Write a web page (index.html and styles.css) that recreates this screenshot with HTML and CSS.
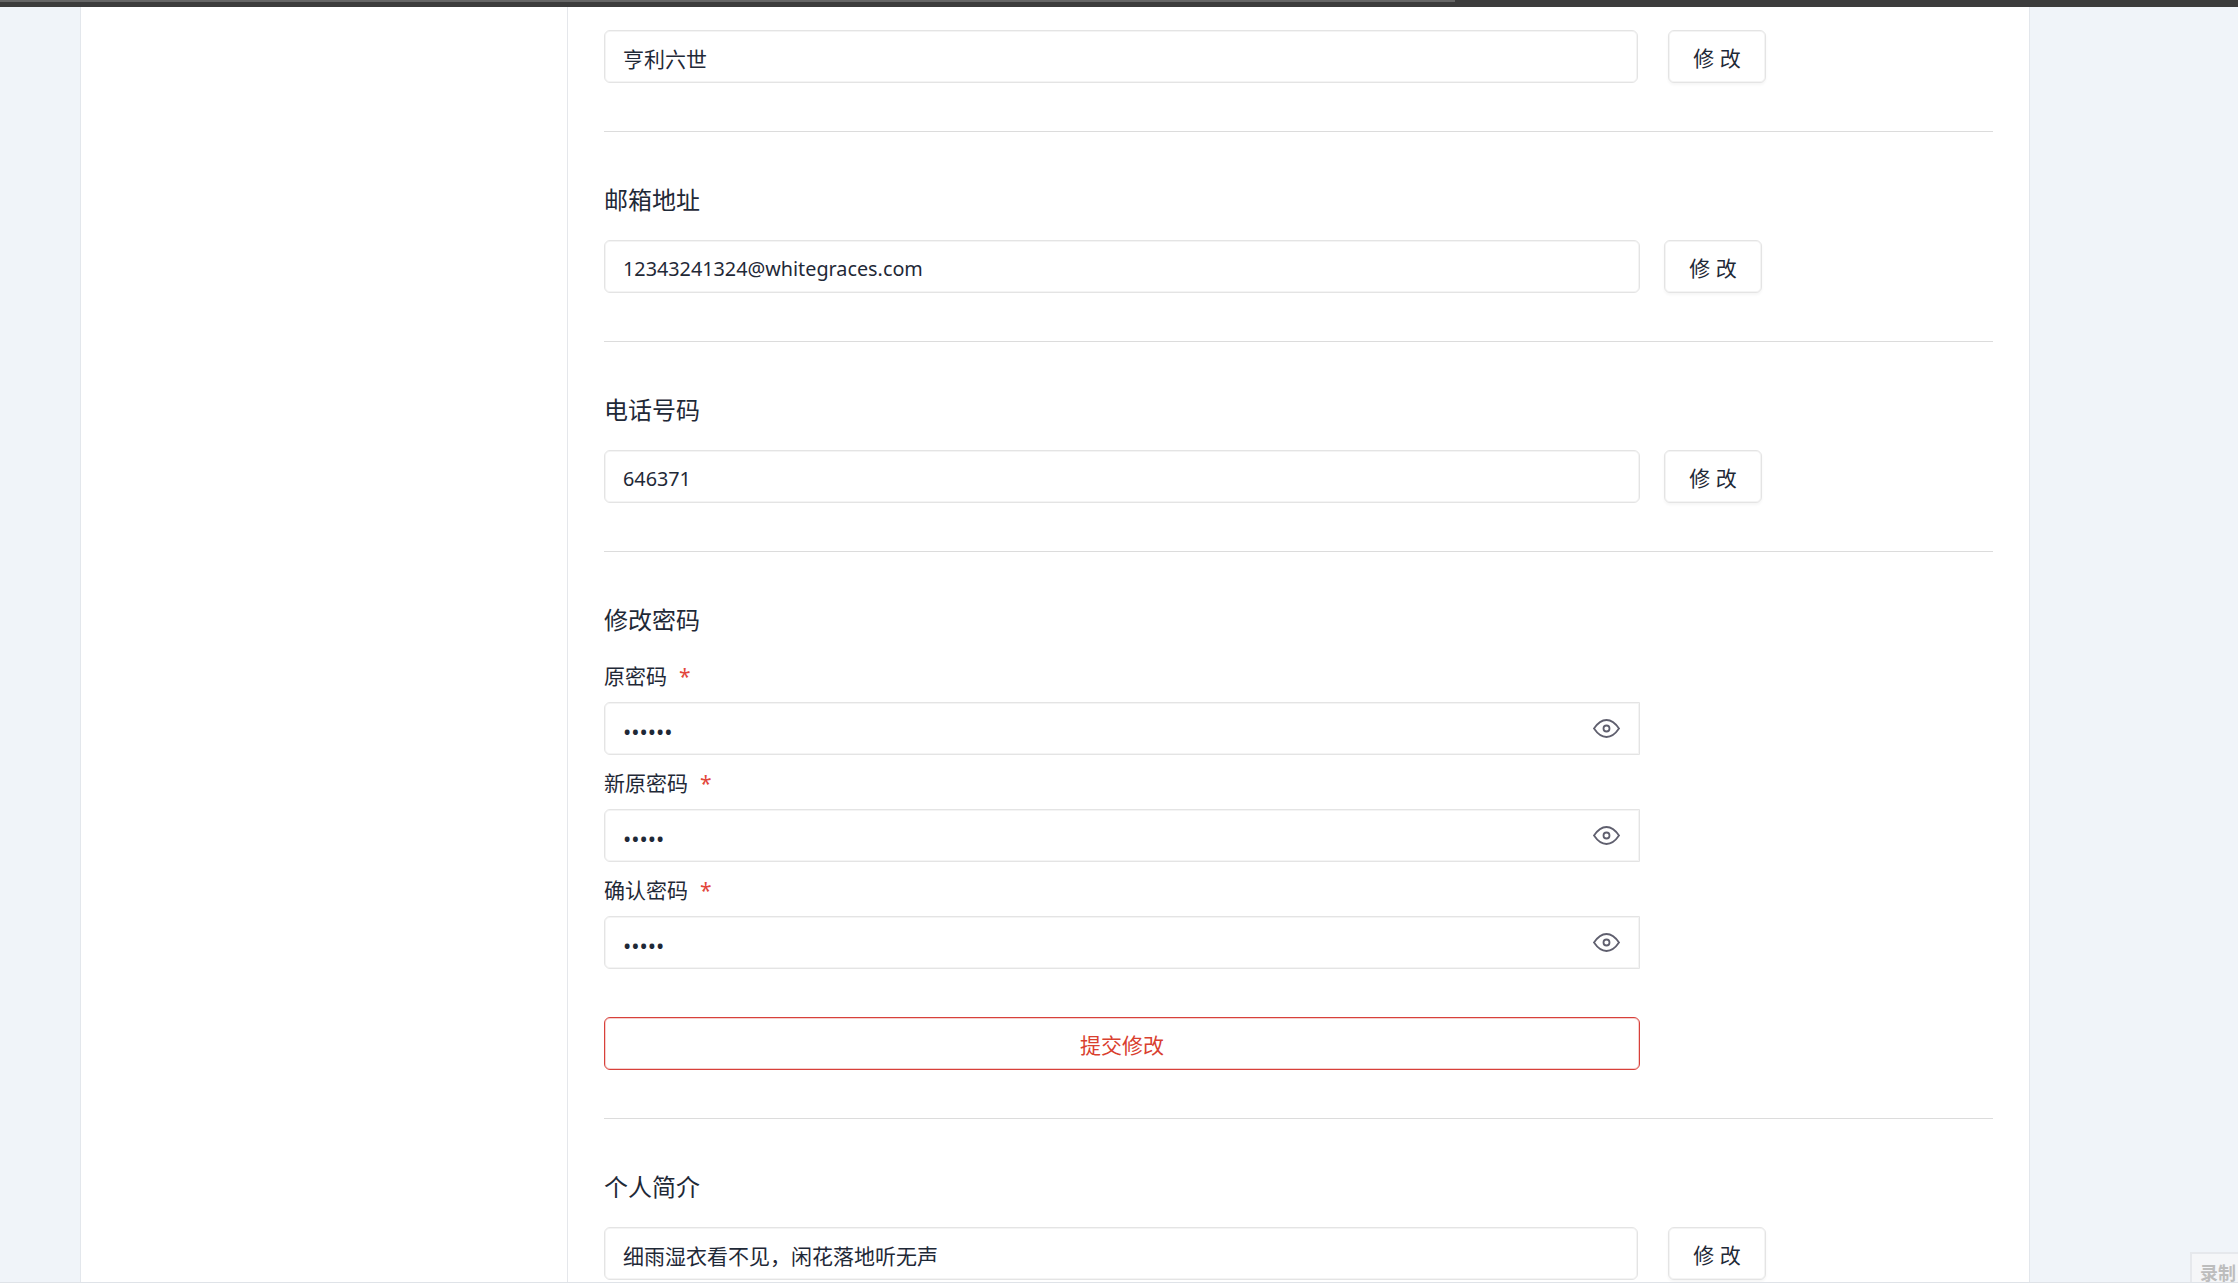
FILE: index.html
```html
<!DOCTYPE html>
<html lang="zh-CN">
<head>
<meta charset="utf-8">
<title>个人设置</title>
<link rel="stylesheet" href="styles.css">
</head>
<body>
<div class="topbar"><div class="topbar-progress"></div></div>
<div class="page">
  <aside class="gutter gutter-left"></aside>
  <nav class="sidepanel"></nav>
  <main class="card">
    <div class="row row-wide">
      <input class="field" type="text" value="亨利六世">
      <button class="btn" type="button">修 改</button>
    </div>
    <hr class="divider">
    <h2 class="title">邮箱地址</h2>
    <div class="row">
      <input class="field field-latin" type="text" value="12343241324@whitegraces.com">
      <button class="btn" type="button">修 改</button>
    </div>
    <hr class="divider">
    <h2 class="title">电话号码</h2>
    <div class="row">
      <input class="field field-latin" type="text" value="646371">
      <button class="btn" type="button">修 改</button>
    </div>
    <hr class="divider">
    <h2 class="title title-form">修改密码</h2>
    <form class="pw-form">
      <label class="pw-label">原密码<span class="req">*</span></label>
      <div class="pw-box">
        <input class="field field-pw" type="password" value="123456">
        <svg class="eye" viewBox="0 0 27 19" aria-hidden="true"><path d="M1 9.5C5 3.6 9 1 13.5 1S22 3.6 26 9.5C22 15.4 18 18 13.5 18S5 15.4 1 9.5Z"/><circle cx="13.5" cy="9.5" r="3"/></svg>
      </div>
      <label class="pw-label">新原密码<span class="req">*</span></label>
      <div class="pw-box">
        <input class="field field-pw" type="password" value="12345">
        <svg class="eye" viewBox="0 0 27 19" aria-hidden="true"><path d="M1 9.5C5 3.6 9 1 13.5 1S22 3.6 26 9.5C22 15.4 18 18 13.5 18S5 15.4 1 9.5Z"/><circle cx="13.5" cy="9.5" r="3"/></svg>
      </div>
      <label class="pw-label">确认密码<span class="req">*</span></label>
      <div class="pw-box">
        <input class="field field-pw" type="password" value="12345">
        <svg class="eye" viewBox="0 0 27 19" aria-hidden="true"><path d="M1 9.5C5 3.6 9 1 13.5 1S22 3.6 26 9.5C22 15.4 18 18 13.5 18S5 15.4 1 9.5Z"/><circle cx="13.5" cy="9.5" r="3"/></svg>
      </div>
      <button class="submit" type="button">提交修改</button>
    </form>
    <hr class="divider">
    <h2 class="title">个人简介</h2>
    <div class="row row-wide">
      <input class="field" type="text" value="细雨湿衣看不见，闲花落地听无声">
      <button class="btn" type="button">修 改</button>
    </div>
  </main>
  <aside class="gutter gutter-right"></aside>
</div>
<div class="recorder">录制</div>
</body>
</html>
```
FILE: styles.css
```css
* { box-sizing: border-box; }
html, body { margin: 0; height: 100%; overflow: hidden; }
body {
  position: relative;
  display: flex;
  flex-direction: column;
  height: 1283px;
  background: #f0f4f9;
  color: #1f2937;
  font-family: "Noto Sans", "Noto Sans CJK SC", sans-serif;
  font-size: 21px;
}
.topbar { flex: none; height: 7px; background: #3c3c3c; }
.topbar-progress { width: 1455px; height: 2px; background: #666; }
.page {
  flex: 1;
  min-height: 0;
  display: flex;
  border-bottom: 1px solid #dfe3e8;
  overflow: hidden;
}
.gutter { background: #f0f4f9; }
.gutter-left { flex: none; width: 81px; border-right: 1px solid #e3e7ec; }
.gutter-right { flex: 1; }
.sidepanel { flex: none; width: 486px; background: #fff; }
.card {
  flex: none;
  width: 1463px;
  padding: 23px 36px 0 36px;
  background: #fff;
  border-left: 1px solid #e5e7eb;
  border-right: 1px solid #e3e7ec;
}
.row { display: flex; gap: 24px; height: 53px; flex: none; }
.row .field { width: 1036px; }
.row-wide { gap: 30px; }
.row-wide .field { width: 1034px; }
.field {
  display: block;
  height: 53px;
  padding: 3px 18px 0;
  border: 1px solid #e4e4e4;
  border-radius: 6px;
  background: #fff;
  box-shadow: inset 0 0 0 1px #f4f4f4;
  color: #1f2937;
  font: inherit;
  outline: none;
}
.field-latin { font-size: 19.8px; }
.btn {
  flex: none;
  width: 98px;
  height: 53px;
  padding: 0;
  border: 1px solid #e4e4e4;
  border-radius: 6px;
  background: #fff;
  box-shadow: inset 0 0 0 1px #f4f4f4, 0 2px 3px rgba(0, 0, 0, .04);
  color: #1f2937;
  font: inherit;
}
.divider {
  height: 1px;
  margin: 48px 0 50px;
  border: 0;
  background: #dcdcdc;
}
.title {
  margin: 0 0 22px;
  font-size: 24px;
  font-weight: 400;
  line-height: 36px;
}
.title-form { margin-bottom: 23px; }
.pw-form { width: 1036px; }
.pw-label {
  display: block;
  height: 30px;
  margin-bottom: 11px;
  font-size: 21px;
  line-height: 30px;
}
.req { margin-left: 12px; color: #e2463c; }
.pw-box { position: relative; margin-bottom: 13px; }
.field-pw { width: 100%; padding-top: 4px; border-radius: 6px 0 0 6px; font-size: 22px; }
.eye {
  position: absolute;
  top: 17px;
  right: 20px;
  width: 27px;
  height: 19px;
  fill: none;
  stroke: #5f5f6e;
  stroke-width: 1.8;
}
.submit {
  display: block;
  width: 100%;
  height: 53px;
  margin-top: 48px;
  padding: 0;
  border: 1px solid #d8403a;
  border-radius: 6px;
  background: #fff;
  box-shadow: inset 0 0 0 1px rgba(216, 64, 58, .25);
  color: #d9402f;
  font: inherit;
}
.recorder {
  position: absolute;
  right: 0;
  bottom: 1px;
  width: 48px;
  height: 30px;
  padding: 10px 0 0 8px;
  border: 2px solid #e6e8ec;
  border-right: 0;
  border-bottom: 0;
  background: #f5f6f8;
  color: #bdbdbd;
  font-size: 18px;
  font-weight: 700;
  line-height: 18px;
  white-space: nowrap;
}
```
